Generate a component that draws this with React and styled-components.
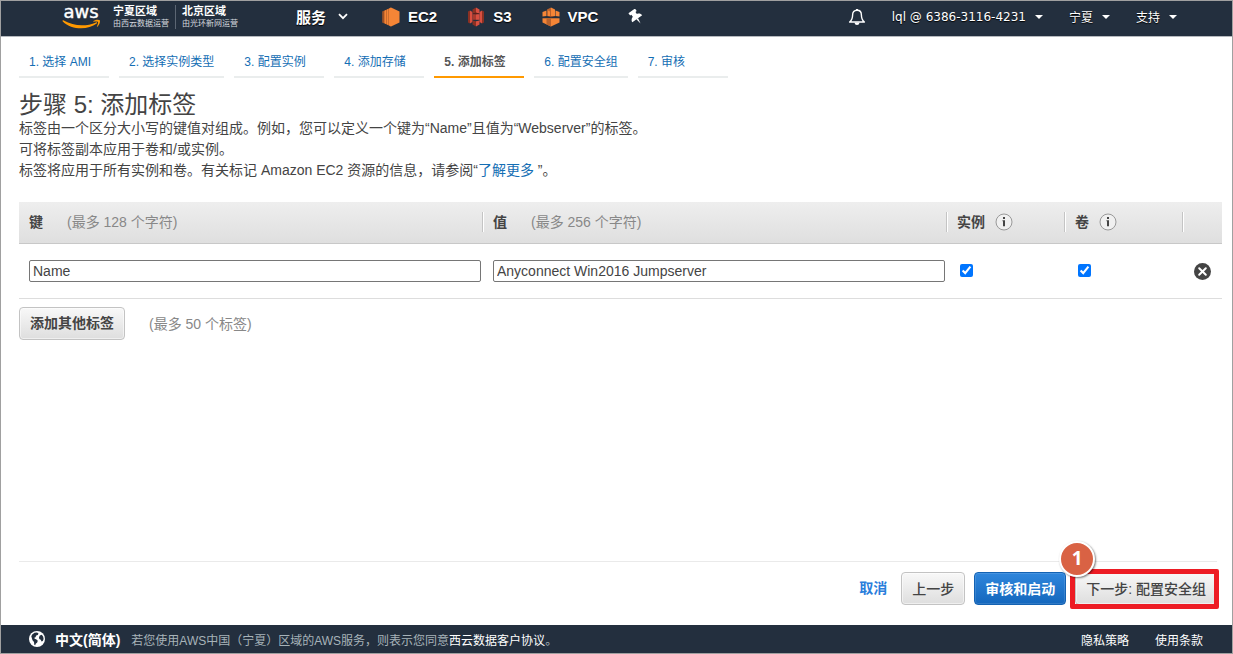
import React, { useState } from "react";
import styled, { createGlobalStyle, css } from "styled-components";

const GlobalStyle = createGlobalStyle`
  * {
    box-sizing: border-box;
  }
  body {
    margin: 0;
    background: #fff;
    color: #444;
    font-family: "Liberation Sans", "Noto Sans CJK SC", sans-serif;
    font-size: 14px;
  }
`;

const Page = styled.div`
  display: flex;
  flex-direction: column;
  min-height: 100vh;
  border: 1px solid #a0a0a0;
`;

/* top bar */
const Header = styled.header`
  display: flex;
  align-items: center;
  height: 36px;
  padding: 0 55px 4px 61px;
  background: #232f3e;
  border-bottom: 1px solid #b5b9be;
  color: #fff;
`;
const Brand = styled.a`
  display: flex;
  align-items: center;
  color: #fff;
  text-decoration: none;
`;
const Logo = styled.svg`
  display: block;
  width: 40px;
  height: 27px;
  margin-right: 11px;
  overflow: visible;
`;
const Region = styled.span`
  display: flex;
  flex-direction: column;
  & + & {
    margin-left: 6px;
    padding-left: 6px;
    border-left: 1px solid #5c6673;
  }
`;
const RegionName = styled.span`
  font-size: 11px;
  font-weight: 700;
  line-height: 13px;
`;
const RegionOwner = styled.span`
  font-size: 8px;
  line-height: 11px;
  color: #d5d9de;
`;
const Services = styled.nav`
  display: flex;
  align-items: center;
  flex: 1;
  gap: 30px;
  margin-left: 58px;
`;
const menuItem = css`
  display: flex;
  align-items: center;
  padding: 0;
  border: 0;
  background: none;
  color: #fff;
  font-family: inherit;
  text-decoration: none;
  text-shadow: 0 1px 1px #000;
  white-space: nowrap;
  cursor: pointer;
`;
const ServicesButton = styled.button`
  ${menuItem}
  gap: 12px;
  margin-right: 4px;
  font-size: 15px;
  font-weight: 700;
`;
const ServiceLink = styled.a`
  ${menuItem}
  gap: 8px;
  font-size: 15px;
  font-weight: 700;
`;
const IconButton = styled.button`
  ${menuItem}
`;
const Account = styled.div`
  display: flex;
  align-items: center;
  gap: 26px;
`;
const AccountButton = styled.button`
  ${menuItem}
  gap: 9px;
  font-family: "DejaVu Sans", "Noto Sans CJK SC", sans-serif;
  font-size: 12px;
`;
const Caret = styled.span`
  border: 4px solid transparent;
  border-top-color: #fff;
  border-bottom: 0;
`;

/* wizard */
const Main = styled.main`
  flex: 1;
  padding: 12px 10px 0 18px;
`;
const Steps = styled.nav`
  display: flex;
  gap: 10px;
`;
const Step = styled.a`
  min-width: 90px;
  height: 29px;
  padding: 0 10px;
  border-bottom: 2px solid ${(props) => (props.$active ? "#ff9900" : "#eaeded")};
  color: ${(props) => (props.$active ? "#555" : "#146eb4")};
  font-size: 12px;
  font-weight: ${(props) => (props.$active ? 700 : 400)};
  line-height: 26px;
  text-decoration: none;
  white-space: nowrap;
`;
const Title = styled.h1`
  margin: 14px 0 0;
  color: #444;
  font-size: 24px;
  font-weight: 400;
  line-height: 26px;
`;
const Intro = styled.p`
  margin: 0;
  line-height: 21px;
`;
const Link = styled.a`
  color: #146eb4;
  text-decoration: none;
`;

/* tags table */
const TagTable = styled.table`
  width: 100%;
  margin-top: 21px;
  border-collapse: collapse;
  table-layout: fixed;
`;
const Th = styled.th`
  width: ${(props) => props.$width || "auto"};
  height: 41px;
  padding: 0 0 1px;
  border-bottom: 1px solid #c8c8c8;
  text-align: left;
`;
const HeadRow = styled.tr`
  background: linear-gradient(#eee, #dfdfdf);
`;
const HeadCell = styled.div`
  display: flex;
  align-items: center;
  height: 20px;
  padding-left: 10px;
  border-right: ${(props) => (props.$last ? 0 : "1px solid #c4c4c4")};
  box-shadow: ${(props) => (props.$last ? "none" : "1px 0 0 #fff")};
  line-height: 18px;
`;
const Limit = styled.span`
  margin-left: 24px;
  color: #888;
  font-weight: 400;
`;
const InfoButton = styled.button`
  display: flex;
  margin-left: 10px;
  padding: 0;
  border: 0;
  background: none;
  cursor: pointer;
`;
const Td = styled.td`
  height: 55px;
  padding: 0 2px 0 10px;
  border-bottom: 1px solid #ddd;
`;
const TextInput = styled.input`
  display: block;
  width: 100%;
  height: 22px;
  padding: 0 3px;
  border: 1px solid #767676;
  border-radius: 2px;
  color: #444;
  font-family: inherit;
  font-size: 14px;
`;
const Checkbox = styled.input`
  display: block;
  width: 13px;
  height: 13px;
  margin: 0 3px;
`;
const RemoveButton = styled.button`
  display: flex;
  padding: 0;
  border: 0;
  background: none;
  cursor: pointer;
`;
const AddRow = styled.div`
  display: flex;
  align-items: center;
  margin-top: 8px;
`;

const Button = styled.button`
  height: 33px;
  padding: 0 10px 2px;
  border: 1px solid ${(props) => (props.$primary ? "#1362b3" : "#c3c3c3")};
  border-radius: 4px;
  background: ${(props) =>
    props.$primary
      ? "linear-gradient(#2f86dc, #1467bd)"
      : "linear-gradient(#f8f8f8, #dedede)"};
  box-shadow: inset 0 0 0 1px
    ${(props) =>
      props.$primary ? "rgba(255, 255, 255, 0.12)" : "rgba(255, 255, 255, 0.5)"};
  color: ${(props) => (props.$primary ? "#fff" : "#444")};
  font-family: inherit;
  font-size: 14px;
  font-weight: ${(props) => (props.$light ? 500 : 700)};
  white-space: nowrap;
  cursor: pointer;
`;
const Actions = styled.div`
  display: flex;
  align-items: flex-start;
  justify-content: flex-end;
  gap: 9px;
  height: 64px;
  margin: 0 15px 0 18px;
  padding-top: 10px;
  border-top: 1px solid #eaeaea;
`;
const Cancel = styled.a`
  margin-right: 5px;
  color: #2a7edb;
  font-weight: 700;
  line-height: 32px;
  text-decoration: none;
`;
const Marked = styled.div`
  position: relative;
`;
const Frame = styled.span`
  position: absolute;
  inset: -3px -2px -4px -5px;
  border: 5px solid #ed1c24;
  border-radius: 2px;
  pointer-events: none;
`;
const Badge = styled.span`
  position: absolute;
  top: -31px;
  left: -16px;
  width: 36px;
  height: 36px;
  border: 2px solid #fff;
  border-radius: 50%;
  background: #d96244;
  box-shadow: 1px 1px 2px rgba(0, 0, 0, 0.5);
  color: #fff;
  font-family: "Open Sans", sans-serif;
  font-size: 19px;
  font-weight: 700;
  line-height: 31px;
  text-align: center;
`;

/* bottom bar */
const Footer = styled.footer`
  display: flex;
  align-items: center;
  height: 28px;
  padding: 0 29px 0 28px;
  background: #232f3e;
  color: #a7b3b9;
  font-size: 12px;
`;
const Language = styled.button`
  ${menuItem}
  gap: 10px;
  margin-right: 11px;
  font-size: 14px;
  font-weight: 700;
  text-shadow: none;
`;
const Notice = styled.span`
  flex: 1;
`;
const FooterLink = styled.a`
  margin-left: ${(props) => props.$gap || "0"};
  color: #fff;
  text-decoration: none;
`;

const AwsLogo = () => (
  <Logo viewBox="0 0 40 27" aria-label="aws">
    <text
      x="19"
      y="15"
      fill="#fff"
      stroke="#fff"
      strokeWidth="0.400"
      textAnchor="middle"
      fontFamily="DejaVu Sans, sans-serif"
      fontSize="18"
    >
      aws
    </text>
    <path
      d="M0.6 17.6c0.3-0.4 0.7-0.3 1.2 0C11.500 23.400 24.500 23.800 34 19.400c0.900-0.400 1.500 0.500 0.700 1.200C26 27.300 9.500 27.200 0.800 18.500c-0.300-0.300-0.400-0.600-0.200-0.900z"
      fill="#ff9900"
    />
    <path
      d="M31.500 17.900c2-1.400 5.600-1.500 6.300-0.700 0.700 0.900-0.300 4.700-2.400 6.500-0.400 0.300-0.700 0.100-0.500-0.300 0.600-1.300 1.500-3.800 1.100-4.400-0.500-0.600-2.900-0.400-4.200-0.300-0.500 0-0.600-0.500-0.300-0.800z"
      fill="#ff9900"
    />
  </Logo>
);

const Ec2Icon = () => (
  <svg width="18" height="20" viewBox="0 0 18 20">
    <path d="M0.500 4.500L9 0.500v19l-8.500-4z" fill="#c4682c" />
    <path d="M0.500 4.500L2 3.800v12.400l-1.500-0.700z" fill="#9d5025" />
    <path d="M2.700 3.700L4 3.100v13.800l-1.300-0.600zM4.900 2.700L6.200 2v16l-1.300-0.700z" fill="#f58536" />
    <path d="M7 1.700L9 0.500L17.500 4.500v11L9 19.500l-2-1.200z" fill="#f58536" />
  </svg>
);

const S3Icon = () => (
  <svg width="18" height="20" viewBox="0 0 18 20">
    <path d="M1 4.500l2-1v13l-2-1z" fill="#8c3123" />
    <path d="M3 3.500l2.500 1.500v10L3 16.500z" fill="#d84f40" />
    <path d="M17 4.500l-2-1v13l2-1z" fill="#8c3123" />
    <path d="M15 3.500l-2.500 1.500v10l2.500 1.500z" fill="#d84f40" />
    <path d="M9 0.500L5.500 2.500v4L9 5.800z" fill="#8c3123" />
    <path d="M9 0.500l3.500 2v4L9 5.800z" fill="#d84f40" />
    <path d="M9 19.500l-3.500-2v-4l3.500 0.700z" fill="#8c3123" />
    <path d="M9 19.500l3.500-2v-4l-3.500 0.700z" fill="#d84f40" />
    <path d="M5.500 7.200h3.500v5.600h-3.500z" fill="#a63a2d" />
    <path d="M9 7.200h3.500v5.600h-3.500z" fill="#d84f40" />
    <path d="M5.500 6.500l3.500-0.700 3.500 0.700-3.500 0.700z" fill="#5e1f18" />
  </svg>
);

const VpcIcon = () => (
  <svg width="18" height="20" viewBox="0 0 18 20">
    <path d="M9 0.500L5 2.500v6.500h4z" fill="#b9622c" />
    <path d="M9 0.500l4 2v6.500H9z" fill="#f58536" />
    <path d="M0.500 5L4.500 3.500v5.500l-4 0.500z" fill="#f58536" />
    <path d="M13.500 3.500l4 1.500v4.500l-4-0.500z" fill="#f58536" />
    <path d="M6 3.500l2 1v4.500H6z" fill="#f58536" />
    <path d="M0.500 11.200H9v8.300l-8.500-4z" fill="#f58536" />
    <path d="M4.500 11.200H9v8.300l-4.500-2z" fill="#b9622c" />
    <path d="M9 11.200h8.500v4.300L9 19.500z" fill="#f58536" />
    <path d="M5 9.500l4-0.500 4.500 0.500-4.500 0.700z" fill="#9d5025" />
  </svg>
);

const PinIcon = () => (
  <svg width="16" height="16" viewBox="0 0 16 16">
    <g transform="rotate(-35 8 8)" fill="#fff">
      <path d="M4 0.500h8v3h-1.500v2.500c2 0.700 3.500 1.800 3.500 4.200H2C2 7.800 3.500 6.700 5.500 6V3.500H4z" />
      <path d="M7 10h2L8 16z" />
    </g>
  </svg>
);

const BellIcon = () => (
  <svg width="18" height="18" viewBox="0 0 18 18" fill="none">
    <path
      d="M9 2.200c-2.900 0-4.400 2.100-4.400 4.700 0 3.800-1 5.500-3 7.100h14.800c-2-1.600-3-3.300-3-7.100 0-2.600-1.500-4.700-4.400-4.700z"
      stroke="#fff"
      strokeWidth="1.400"
      strokeLinejoin="round"
    />
    <path d="M8 1h2v1.500H8z" fill="#fff" />
    <path d="M6.500 14.500h5c-0.200 1.700-1.200 2.500-2.500 2.500s-2.300-0.800-2.500-2.500z" fill="#fff" />
  </svg>
);

const ChevronIcon = () => (
  <svg width="10" height="7" viewBox="0 0 10 7" fill="none">
    <path d="M1 1.200l4 4 4-4" stroke="#fff" strokeWidth="1.800" />
  </svg>
);

const InfoIcon = () => (
  <svg width="18" height="18" viewBox="0 0 18 18">
    <circle cx="9" cy="9" r="8" fill="#f0f0f0" stroke="#999" />
    <path d="M8 4h2v2H8zM7.500 7.300H10v6H8v-5h-0.500z" fill="#444" />
  </svg>
);

const RemoveIcon = () => (
  <svg width="18" height="18" viewBox="0 0 18 18">
    <circle cx="9.500" cy="9.500" r="8.500" fill="#444" />
    <path
      d="M6.200 6.200l6.600 6.600M12.800 6.200l-6.600 6.600"
      stroke="#fff"
      strokeWidth="2"
      strokeLinecap="round"
    />
  </svg>
);

const GlobeIcon = () => (
  <svg width="16" height="16" viewBox="0 0 16 16">
    <circle cx="8" cy="8" r="8" fill="#fff" />
    <path
      d="M3.200 3.600L5.500 1.800 8 1.500l1.500 1L8.800 4 7.200 4.600 6.500 6.200l-1.200 0.600 0.400 1 1.800 0.700 1.300 1.300-0.600 1.700-1.500 1.200-0.500 1.500-0.900-0.500-0.300-2.700-1.500-1.700L2.800 7 2.300 5.200z"
      fill="#232f3e"
    />
    <path
      d="M10.800 4.500l2-0.700 1.400 1.900 0.400 2.300-0.800 2-1.300 0.500-0.700-1.800-1.500-0.700-0.300-1.800z"
      fill="#232f3e"
    />
  </svg>
);

const services = [
  { name: "EC2", Icon: Ec2Icon },
  { name: "S3", Icon: S3Icon },
  { name: "VPC", Icon: VpcIcon },
];

const steps = [
  "1. 选择 AMI",
  "2. 选择实例类型",
  "3. 配置实例",
  "4. 添加存储",
  "5. 添加标签",
  "6. 配置安全组",
  "7. 审核",
];

const TopBar = () => (
  <Header>
    <Brand href="#">
      <AwsLogo />
      <Region>
        <RegionName>宁夏区域</RegionName>
        <RegionOwner>由西云数据运营</RegionOwner>
      </Region>
      <Region>
        <RegionName>北京区域</RegionName>
        <RegionOwner>由光环新网运营</RegionOwner>
      </Region>
    </Brand>
    <Services>
      <ServicesButton>
        服务 <ChevronIcon />
      </ServicesButton>
      {services.map(({ name, Icon }) => (
        <ServiceLink href="#" key={name}>
          <Icon />
          {name}
        </ServiceLink>
      ))}
      <IconButton aria-label="Pin">
        <PinIcon />
      </IconButton>
    </Services>
    <Account>
      <IconButton aria-label="Notifications">
        <BellIcon />
      </IconButton>
      <AccountButton>
        lql @ 6386-3116-4231 <Caret />
      </AccountButton>
      <AccountButton>
        宁夏 <Caret />
      </AccountButton>
      <AccountButton>
        支持 <Caret />
      </AccountButton>
    </Account>
  </Header>
);

const Tags = () => {
  const [tag, setTag] = useState({
    key: "Name",
    value: "Anyconnect Win2016 Jumpserver",
    instance: true,
    volume: true,
  });

  return (
    <TagTable>
      <thead>
        <HeadRow>
          <Th>
            <HeadCell>
              键<Limit>(最多 128 个字符)</Limit>
            </HeadCell>
          </Th>
          <Th>
            <HeadCell>
              值<Limit>(最多 256 个字符)</Limit>
            </HeadCell>
          </Th>
          <Th $width="118px">
            <HeadCell>
              实例
              <InfoButton aria-label="实例">
                <InfoIcon />
              </InfoButton>
            </HeadCell>
          </Th>
          <Th $width="118px">
            <HeadCell>
              卷
              <InfoButton aria-label="卷">
                <InfoIcon />
              </InfoButton>
            </HeadCell>
          </Th>
          <Th $width="39px">
            <HeadCell $last />
          </Th>
        </HeadRow>
      </thead>
      <tbody>
        <tr>
          <Td>
            <TextInput
              aria-label="键"
              value={tag.key}
              onChange={(e) => setTag({ ...tag, key: e.target.value })}
            />
          </Td>
          <Td>
            <TextInput
              aria-label="值"
              value={tag.value}
              onChange={(e) => setTag({ ...tag, value: e.target.value })}
            />
          </Td>
          <Td>
            <Checkbox
              type="checkbox"
              aria-label="实例"
              checked={tag.instance}
              onChange={(e) => setTag({ ...tag, instance: e.target.checked })}
            />
          </Td>
          <Td>
            <Checkbox
              type="checkbox"
              aria-label="卷"
              checked={tag.volume}
              onChange={(e) => setTag({ ...tag, volume: e.target.checked })}
            />
          </Td>
          <Td>
            <RemoveButton aria-label="Remove">
              <RemoveIcon />
            </RemoveButton>
          </Td>
        </tr>
      </tbody>
    </TagTable>
  );
};

const App = () => {
  return (
    <Page>
      <GlobalStyle />
      <TopBar />
      <Main>
        <Steps>
          {steps.map((step, i) => (
            <Step href="#" key={step} $active={i === 4}>
              {step}
            </Step>
          ))}
        </Steps>
        <Title>步骤 5: 添加标签</Title>
        <Intro>
          标签由一个区分大小写的键值对组成。例如，您可以定义一个键为“Name”且值为“Webserver”的标签。
        </Intro>
        <Intro>可将标签副本应用于卷和/或实例。</Intro>
        <Intro>
          标签将应用于所有实例和卷。有关标记 Amazon EC2 资源的信息，请参阅“
          <Link href="#">了解更多</Link> ”。
        </Intro>
        <Tags />
        <AddRow>
          <Button>添加其他标签</Button>
          <Limit>(最多 50 个标签)</Limit>
        </AddRow>
      </Main>
      <Actions>
        <Cancel href="#">取消</Cancel>
        <Button $light>上一步</Button>
        <Button $primary>审核和启动</Button>
        <Marked>
          <Button $light>下一步: 配置安全组</Button>
          <Frame />
          <Badge>1</Badge>
        </Marked>
      </Actions>
      <Footer>
        <Language>
          <GlobeIcon />
          中文(简体)
        </Language>
        <Notice>
          若您使用AWS中国（宁夏）区域的AWS服务，则表示您同意
          <FooterLink href="#">西云数据客户协议</FooterLink>。
        </Notice>
        <FooterLink href="#">隐私策略</FooterLink>
        <FooterLink href="#" $gap="26px">
          使用条款
        </FooterLink>
      </Footer>
    </Page>
  );
};

export default App;
